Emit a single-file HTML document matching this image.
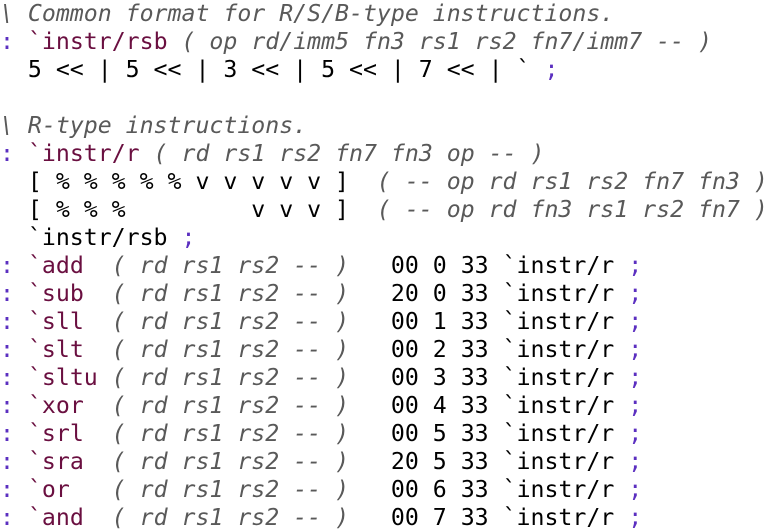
<!DOCTYPE html>
<html><head><meta charset="utf-8"><style>
html,body{margin:0;padding:0;background:#fff;width:774px;height:532px;overflow:hidden}
pre{margin:0;padding:0;font-family:"DejaVu Sans Mono","Liberation Mono",monospace;font-size:23.2px;line-height:28px;color:#000;white-space:pre}
.c{color:#595959;font-style:italic}
.p{color:#5b2fc0}
.n{color:#6a0f40}
</style></head><body><pre><span class="c">\ Common format for R/S/B-type instructions.</span>
<span class="p">:</span> <span class="n">`instr/rsb</span> <span class="c">( op rd/imm5 fn3 rs1 rs2 fn7/imm7 -- )</span>
  5 &lt;&lt; | 5 &lt;&lt; | 3 &lt;&lt; | 5 &lt;&lt; | 7 &lt;&lt; | ` <span class="p">;</span>

<span class="c">\ R-type instructions.</span>
<span class="p">:</span> <span class="n">`instr/r</span> <span class="c">( rd rs1 rs2 fn7 fn3 op -- )</span>
  [ % % % % % v v v v v ]  <span class="c">( -- op rd rs1 rs2 fn7 fn3 )</span>
  [ % % %         v v v ]  <span class="c">( -- op rd fn3 rs1 rs2 fn7 )</span>
  `instr/rsb <span class="p">;</span>
<span class="p">:</span> <span class="n">`add</span>  <span class="c">( rd rs1 rs2 -- )</span>   00 0 33 `instr/r <span class="p">;</span>
<span class="p">:</span> <span class="n">`sub</span>  <span class="c">( rd rs1 rs2 -- )</span>   20 0 33 `instr/r <span class="p">;</span>
<span class="p">:</span> <span class="n">`sll</span>  <span class="c">( rd rs1 rs2 -- )</span>   00 1 33 `instr/r <span class="p">;</span>
<span class="p">:</span> <span class="n">`slt</span>  <span class="c">( rd rs1 rs2 -- )</span>   00 2 33 `instr/r <span class="p">;</span>
<span class="p">:</span> <span class="n">`sltu</span> <span class="c">( rd rs1 rs2 -- )</span>   00 3 33 `instr/r <span class="p">;</span>
<span class="p">:</span> <span class="n">`xor</span>  <span class="c">( rd rs1 rs2 -- )</span>   00 4 33 `instr/r <span class="p">;</span>
<span class="p">:</span> <span class="n">`srl</span>  <span class="c">( rd rs1 rs2 -- )</span>   00 5 33 `instr/r <span class="p">;</span>
<span class="p">:</span> <span class="n">`sra</span>  <span class="c">( rd rs1 rs2 -- )</span>   20 5 33 `instr/r <span class="p">;</span>
<span class="p">:</span> <span class="n">`or</span>   <span class="c">( rd rs1 rs2 -- )</span>   00 6 33 `instr/r <span class="p">;</span>
<span class="p">:</span> <span class="n">`and</span>  <span class="c">( rd rs1 rs2 -- )</span>   00 7 33 `instr/r <span class="p">;</span></pre></body></html>
